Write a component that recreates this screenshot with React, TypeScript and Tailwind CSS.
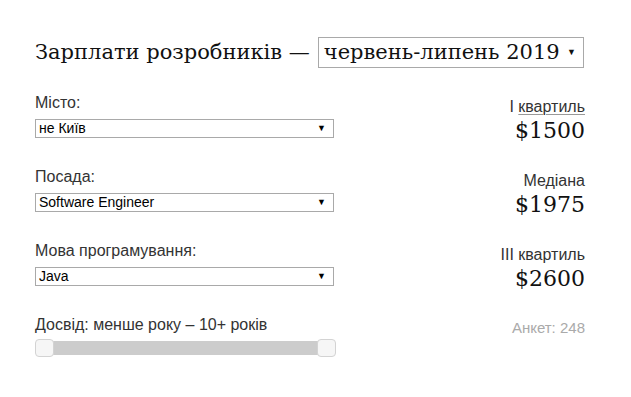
import React from "react";

const serif = { fontFamily: '"DejaVu Serif", Georgia, serif' } as const;

function Select({ value }: { value: string }) {
  return (
    <div className="flex h-[19px] w-[299px] items-center justify-between border border-[#a9a9a9] bg-white pl-[3px] pr-[7px] text-[14px] leading-none text-black">
      <span>{value}</span>
      <span className="text-[9px]">▼</span>
    </div>
  );
}

function Field({ label, value }: { label: string; value: string }) {
  return (
    <div className="flex h-[74px] flex-col">
      <div className="h-[26px] pt-[1px] text-[16px] leading-[18px] text-[#333]">{label}</div>
      <Select value={value} />
    </div>
  );
}

function Stat({ label, value, underline }: { label: string; value: string; underline?: boolean }) {
  return (
    <div className="flex h-[74px] flex-col items-end">
      <div className="h-[22px] pt-[5px] text-[16px] leading-[18px] text-[#333]">
        {underline ? (
          <span>
            I{" "}
            <span className="underline decoration-[#999] decoration-1 underline-offset-[2px]">квартиль</span>
          </span>
        ) : (
          label
        )}
      </div>
      <div className="pt-[3px] text-[22px] leading-[26px] text-[#111]" style={serif}>
        {value}
      </div>
    </div>
  );
}

export default function App() {
  return (
    <div
      className="h-[397px] w-[631px] bg-white pl-[35px] pr-[46px] pt-[37px]"
      style={{ fontFamily: '"Liberation Sans", Arial, sans-serif' }}
    >
      <div className="flex items-center text-[21px] text-[#111]" style={serif}>
        <span>Зарплати розробників —</span>
        <div className="ml-[8px] flex h-[31px] w-[266px] items-center justify-between border border-[#a9a9a9] bg-white pl-[5px] pr-[7px]">
          <span className="text-[21px] leading-none">червень-липень 2019</span>
          <span className="text-[9px]" style={{ fontFamily: '"Liberation Sans", Arial, sans-serif' }}>▼</span>
        </div>
      </div>
      <div className="mt-[24px] flex">
        <div className="w-[300px]">
          <Field label="Місто:" value="не Київ" />
          <Field label="Посада:" value="Software Engineer" />
          <Field label="Мова програмування:" value="Java" />
          <div className="flex flex-col">
            <div className="h-[22px] pt-[1px] text-[16px] leading-[18px] text-[#333]">Досвід: менше року – 10+ років</div>
            <div className="relative mt-[2px] h-[18px] w-[301px]">
              <div className="absolute left-[4px] right-[4px] top-[2px] h-[14px] bg-[#cccccc]" />
              <div className="absolute left-0 top-0 h-[18px] w-[19px] rounded-[4px] border border-[#d3d3d3] bg-[#f6f6f6]" />
              <div className="absolute right-0 top-0 h-[18px] w-[19px] rounded-[4px] border border-[#d3d3d3] bg-[#f6f6f6]" />
            </div>
          </div>
        </div>
        <div className="flex flex-1 flex-col items-end">
          <Stat label="I квартиль" value="$1500" underline />
          <Stat label="Медіана" value="$1975" />
          <Stat label="III квартиль" value="$2600" />
          <div className="pt-[4px] text-[15px] leading-[18px] text-[#aaa]">Анкет: 248</div>
        </div>
      </div>
    </div>
  );
}
